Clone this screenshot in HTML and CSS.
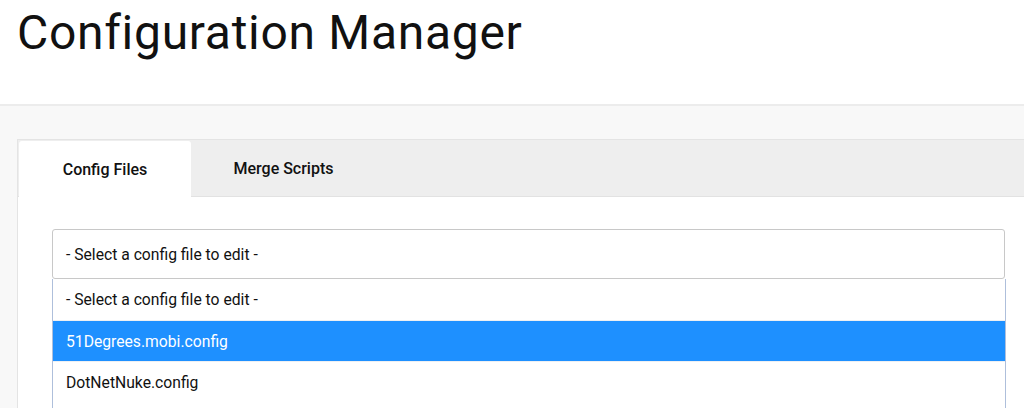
FILE: index.html
```html
<!DOCTYPE html>
<html lang="en">
<head>
<meta charset="utf-8">
<title>Configuration Manager</title>
<link rel="stylesheet" href="styles.css">
</head>
<body>
<header class="page-header">
  <h1 class="page-title">Configuration Manager</h1>
</header>
<main class="page-main">
  <div class="tabs">
    <div class="tab-bar">
      <div class="tab tab-active">Config Files</div>
      <div class="tab">Merge Scripts</div>
    </div>
    <div class="tab-panel">
      <div class="select">- Select a config file to edit -</div>
      <ul class="listbox">
        <li class="option">- Select a config file to edit -</li>
        <li class="option option-selected">51Degrees.mobi.config</li>
        <li class="option">DotNetNuke.config</li>
      </ul>
    </div>
  </div>
</main>
</body>
</html>
```

FILE: styles.css
```css
* { box-sizing: border-box; }
html, body {
  margin: 0;
  padding: 0;
  height: 100%;
  overflow: hidden;
}
body {
  font-family: Roboto, "Liberation Sans", sans-serif;
  color: #111;
  background: #f8f8f8;
}
.page-header {
  height: 106px;
  background: #fff;
  padding: 0 0 0 17px;
  border-bottom: 2px solid #ececec;
}
.page-title {
  margin: 0;
  padding-top: 5px;
  font-size: 48px;
  font-weight: 400;
  line-height: 56px;
  letter-spacing: 0.7px;
  color: #111;
}
.page-main {
  padding: 33px 0 0 17px;
}
.tabs {
  background: #fff;
  border: 1px solid #e4e4e4;
  border-right: none;
  height: 400px;
}
.tab-bar {
  display: flex;
  background: #eeeeee;
  height: 57px;
  padding: 1px 0 0 1px;
  border-bottom: 1px solid #e2e2e2;
}
.tab {
  width: 185px;
  display: flex;
  align-items: center;
  justify-content: center;
  font-size: 16px;
  font-weight: 500;
  color: #111;
}
.tab-active {
  width: 172px;
  background: #fff;
  border-radius: 3px 3px 0 0;
  margin-bottom: -1px;
}
.tab-panel {
  padding: 32px 0 0 34px;
}
.select {
  width: 953px;
  height: 50px;
  border: 1px solid #c8c8c8;
  border-radius: 3px;
  padding-left: 13px;
  display: flex;
  align-items: center;
  font-size: 15.7px;
  color: #111;
}
.listbox {
  list-style: none;
  margin: 0;
  padding: 0 0 40px;
  width: 954px;
  border: 1px solid #aebfdb;
  border-top: none;
  background: #fff;
}
.option {
  height: 41px;
  padding-left: 13px;
  display: flex;
  align-items: center;
  font-size: 15.7px;
  color: #111;
}
.option + .option {
  border-top: 1px solid #eef0f3;
}
.option-selected {
  background: #1e90ff;
  color: #fff;
  border-top-color: #2a8ef5;
}
```
